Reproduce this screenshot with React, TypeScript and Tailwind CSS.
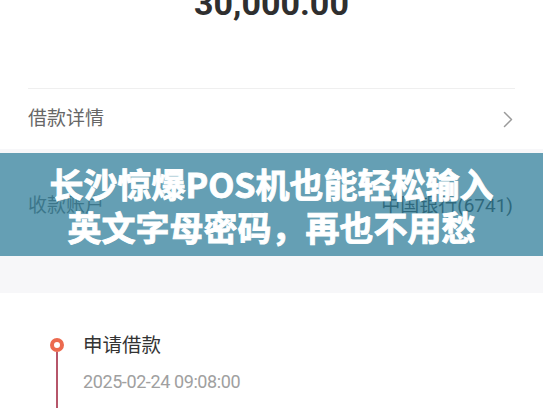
import React from "react";

export default function App() {
  return (
    <div className="relative w-[543px] h-[408px] overflow-hidden bg-white font-['Roboto','Noto_Sans_CJK_SC',sans-serif]">
      {/* Top section */}
      <div className="bg-white px-[28px]">
        <div className="h-[88px] flex justify-center">
          <div className="mt-[-14px] text-[34px] leading-none font-bold text-[#2f2f2f]">30,000.00</div>
        </div>
        <div className="h-px bg-[#efefef]" />
        <div className="h-[60px] flex items-center justify-between pr-[2px]">
          <span className="text-[19px] text-[#666666]">借款详情</span>
          <svg width="10" height="17" viewBox="0 0 10 17" fill="none">
            <path d="M1.5 1.5L8.5 8.5L1.5 15.5" stroke="#9a9a9a" strokeWidth="1.5" strokeLinecap="round" strokeLinejoin="round" />
          </svg>
        </div>
      </div>

      {/* Gray section */}
      <div className="h-[144px] bg-[#f7f7f9] px-[28px] pt-[39px]">
        <div className="h-[36px] flex items-center justify-between pr-[2px]">
          <span className="text-[19px] text-[#666666]">收款账户</span>
          <span className="text-[19px] text-[#333333]">中国银行(6741)</span>
        </div>
      </div>

      {/* Timeline */}
      <div className="bg-white pt-[40px] flex">
        <div className="w-[83px] pl-[50px] flex flex-col">
          <div className="mt-[5px] w-[14px] h-[14px] rounded-full border-[4px] border-[#ec6a4f] bg-white" />
          <div className="ml-[6px] w-[2px] h-[70px] bg-[#b6566a]" />
        </div>
        <div className="flex flex-col">
          <div className="h-[26px] leading-[26px] text-[19.5px] text-[#333333]">申请借款</div>
          <div className="mt-[11px] h-[24px] leading-[24px] text-[18px] tracking-[-0.4px] text-[#a0a0a0]">2025-02-24 09:08:00</div>
        </div>
      </div>

      {/* Banner overlay */}
      <div className="absolute left-0 top-[153px] w-full h-[103px] bg-[rgba(44,125,153,0.72)] flex flex-col items-center justify-center font-['Noto_Sans_CJK_SC',sans-serif]">
        <div className="text-white font-bold text-[34px] leading-[43px] text-center whitespace-nowrap [-webkit-text-stroke:0.9px_white]">长沙惊爆POS机也能轻松输入</div>
        <div className="text-white font-bold text-[34px] leading-[43px] text-center whitespace-nowrap [-webkit-text-stroke:0.9px_white]">英文字母密码，再也不用愁</div>
      </div>
    </div>
  );
}
